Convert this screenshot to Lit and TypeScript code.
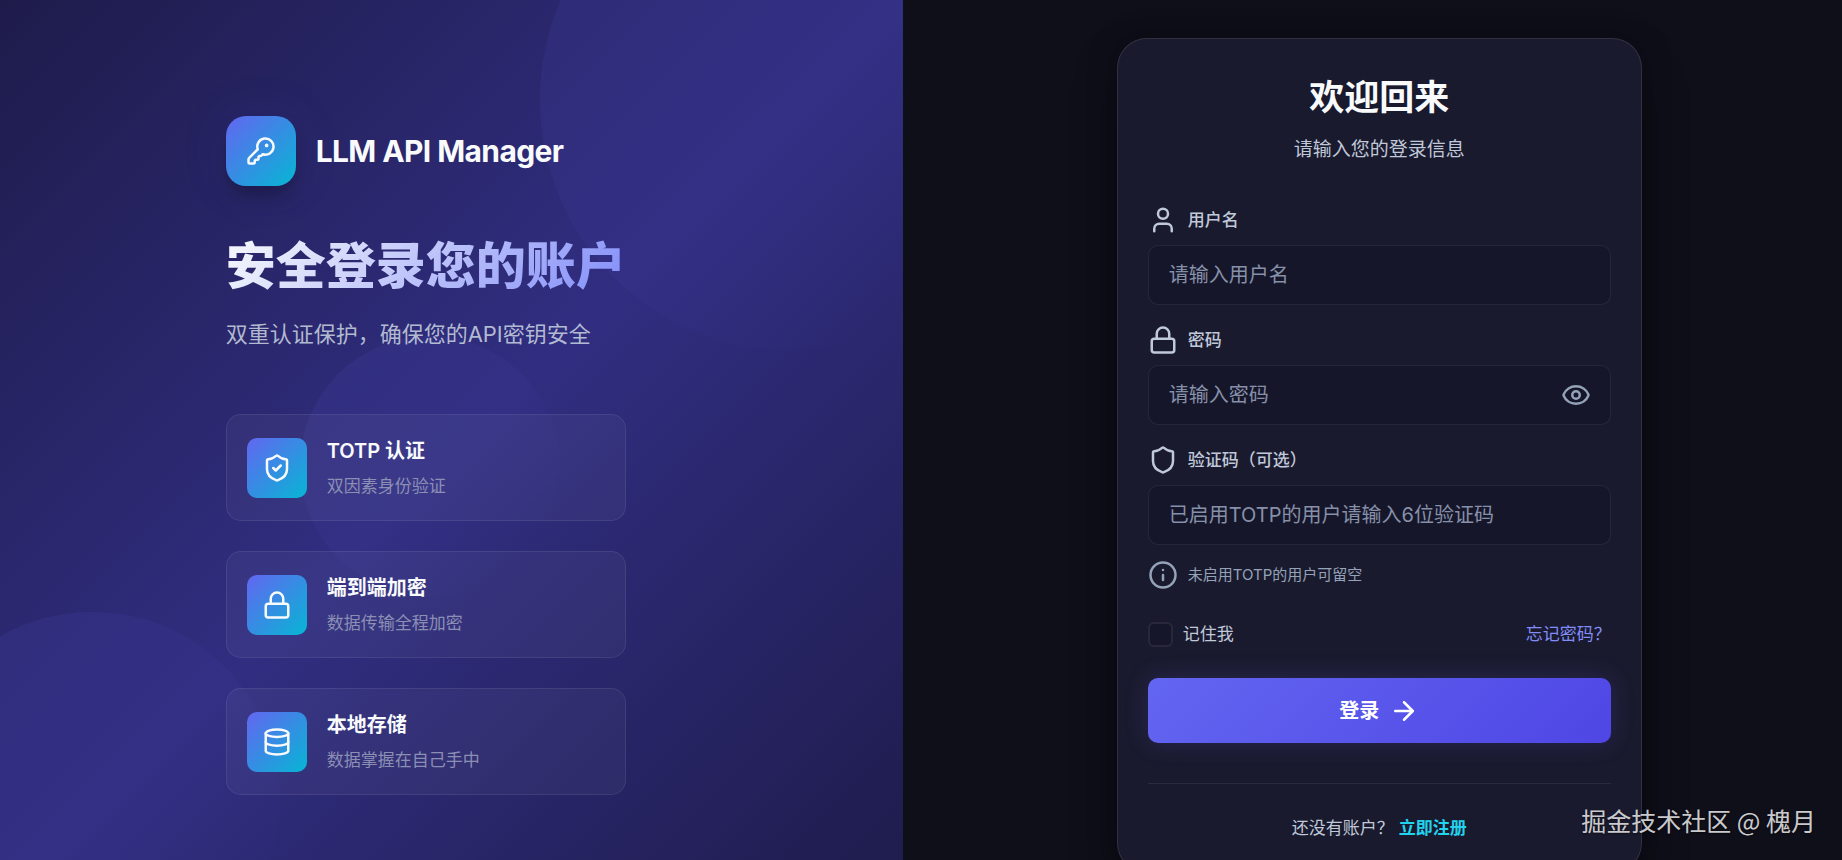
import { LitElement, html, svg, css } from "lit";
import { customElement, state } from "lit/decorators.js";

const icons = {
  key: svg`<path d="M2.586 17.414A2 2 0 0 0 2 18.828V21a1 1 0 0 0 1 1h3a1 1 0 0 0 1-1v-1a1 1 0 0 1 1-1h1a1 1 0 0 0 1-1v-1a1 1 0 0 1 1-1h.172a2 2 0 0 0 1.414-.586l.814-.814a6.5 6.5 0 1 0-4-4z"/><circle cx="16.5" cy="7.5" r=".5" fill="currentColor"/>`,
  shieldCheck: svg`<path d="M20 13c0 5-3.5 7.5-7.66 8.95a1 1 0 0 1-.67-.01C7.5 20.5 4 18 4 13V6a1 1 0 0 1 1-1c2 0 4.5-1.2 6.24-2.72a1.17 1.17 0 0 1 1.52 0C14.51 3.81 17 5 19 5a1 1 0 0 1 1 1z"/><path d="m9 12 2 2 4-4"/>`,
  shield: svg`<path d="M20 13c0 5-3.5 7.5-7.66 8.95a1 1 0 0 1-.67-.01C7.5 20.5 4 18 4 13V6a1 1 0 0 1 1-1c2 0 4.5-1.2 6.24-2.72a1.17 1.17 0 0 1 1.52 0C14.51 3.81 17 5 19 5a1 1 0 0 1 1 1z"/>`,
  lock: svg`<rect x="3" y="11" width="18" height="11" rx="2"/><path d="M7 11V7a5 5 0 0 1 10 0v4"/>`,
  database: svg`<ellipse cx="12" cy="5" rx="9" ry="3"/><path d="M3 5v14a9 3 0 0 0 18 0V5"/><path d="M3 12a9 3 0 0 0 18 0"/>`,
  user: svg`<path d="M19 21v-2a4 4 0 0 0-4-4H9a4 4 0 0 0-4 4v2"/><circle cx="12" cy="7" r="4"/>`,
  eye: svg`<path d="M2.062 12.348a1 1 0 0 1 0-.696 10.75 10.75 0 0 1 19.876 0 1 1 0 0 1 0 .696 10.75 10.75 0 0 1-19.876 0"/><circle cx="12" cy="12" r="3"/>`,
  info: svg`<circle cx="12" cy="12" r="10"/><path d="M12 16v-4"/><path d="M12 8h.01"/>`,
  arrow: svg`<path d="M5 12h14"/><path d="m12 5 7 7-7 7"/>`,
};

const icon = (name: keyof typeof icons) => html`<svg class="icon" viewBox="0 0 24 24" aria-hidden="true">${icons[name]}</svg>`;

const features: { icon: keyof typeof icons; title: string; text: string }[] = [
  { icon: "shieldCheck", title: "TOTP 认证", text: "双因素身份验证" },
  { icon: "lock", title: "端到端加密", text: "数据传输全程加密" },
  { icon: "database", title: "本地存储", text: "数据掌握在自己手中" },
];

@customElement("app-root")
export class AppRoot extends LitElement {
  static styles = css`
    :host {
      display: block;
      position: relative;
      height: 100vh;
      overflow: hidden;
      background: #0f0f1a;
      color: #f8fafc;
      font-family: Inter, "Noto Sans CJK SC", sans-serif;
      font-size: 17px;
      line-height: 28px;
    }
    *, *::before, *::after { box-sizing: border-box; }
    h1, h2, h3, p, ul { margin: 0; padding: 0; }
    a { text-decoration: none; }
    .icon {
      display: block;
      flex: none;
      width: 30px;
      height: 30px;
      fill: none;
      stroke: currentColor;
      stroke-width: 2;
      stroke-linecap: round;
      stroke-linejoin: round;
    }
    .scroll {
      height: 100%;
      overflow-y: auto;
      scrollbar-width: none;
    }
    .page {
      display: grid;
      grid-template-columns: 49fr 51fr;
      min-height: 100%;
    }

    .brand {
      position: relative;
      overflow: hidden;
      display: flex;
      flex-direction: column;
      justify-content: center;
      padding: 40px 0 40px 25%;
      background: linear-gradient(135deg, #1e1b4b 0%, #312e81 50%, #1e1b4b 100%);
    }
    .orb {
      position: absolute;
      border-radius: 50%;
      background: linear-gradient(135deg, rgba(99, 102, 241, 0.11) 0%, rgba(99, 102, 241, 0) 85%);
    }
    .orb.top { width: 500px; height: 500px; top: -150px; right: -137px; }
    .orb.bottom { width: 375px; height: 375px; bottom: -76px; left: -95px; }
    .orb.middle { width: 260px; height: 260px; top: 336px; left: 300px; }
    .content { position: relative; }
    .logo {
      display: flex;
      align-items: center;
      gap: 20px;
      margin-bottom: 50px;
    }
    .mark {
      display: grid;
      place-items: center;
      width: 70px;
      height: 70px;
      border-radius: 20px;
      background: linear-gradient(135deg, #6366f1, #06b6d4);
      box-shadow: 0 12px 20px -4px rgba(0, 0, 0, 0.35), 0 0 50px rgba(99, 102, 241, 0.1);
    }
    .name { font-size: 30px; line-height: 48px; font-weight: 700; letter-spacing: -0.02em; }
    .headline {
      width: fit-content;
      font-size: 50px;
      line-height: 60px;
      font-weight: 800;
      background: linear-gradient(135deg, #f8fafc 0%, #818cf8 100%);
      -webkit-background-clip: text;
      background-clip: text;
      color: transparent;
    }
    .lead {
      margin-top: 20px;
      font-size: 22px;
      line-height: 36px;
      color: rgba(203, 213, 225, 0.85);
    }
    .features {
      display: grid;
      gap: 30px;
      width: 400px;
      max-width: 100%;
      margin-top: 62px;
      list-style: none;
    }
    .feature {
      display: flex;
      align-items: center;
      gap: 20px;
      padding: 20px;
      border: 1px solid rgba(255, 255, 255, 0.08);
      border-radius: 15px;
      background: rgba(255, 255, 255, 0.04);
    }
    .tile {
      display: grid;
      place-items: center;
      width: 60px;
      height: 60px;
      border-radius: 10px;
      background: linear-gradient(135deg, #6366f1, #06b6d4);
    }
    .feature h3 { margin-bottom: 5px; font-size: 20px; line-height: 32px; font-weight: 600; }
    .feature p { color: #8b8fb4; }

    .panel {
      display: flex;
      align-items: center;
      justify-content: center;
      padding: 38px 15px 38px 29px;
    }
    .card {
      width: 525px;
      max-width: 100%;
      padding: 30px;
      border: 1px solid rgba(255, 255, 255, 0.1);
      border-radius: 30px;
      background: #1a1a2e;
      box-shadow: 0 25px 50px -12px rgba(0, 0, 0, 0.6), 0 0 30px rgba(0, 0, 0, 0.3);
    }
    .intro { margin-bottom: 40px; text-align: center; }
    .intro h2 { font-size: 35px; line-height: 56px; font-weight: 700; }
    .intro p { margin-top: 10px; font-size: 19px; line-height: 30px; color: #c0c9da; }
    .field { display: grid; gap: 10px; margin-bottom: 20px; }
    .label {
      display: flex;
      align-items: center;
      gap: 10px;
      font-weight: 500;
      color: #c0c9da;
    }
    .box { position: relative; display: flex; }
    .input {
      width: 100%;
      height: 60px;
      padding: 0 20px;
      border: 1px solid rgba(255, 255, 255, 0.07);
      border-radius: 10px;
      outline: none;
      background: #16162a;
      color: #f8fafc;
      font: inherit;
      font-size: 20px;
    }
    .input:focus { border-color: #6366f1; }
    .input.secret { padding-right: 60px; }
    .input::placeholder { color: #8690a8; opacity: 1; }
    .reveal {
      position: absolute;
      top: 15px;
      right: 20px;
      padding: 0;
      border: 0;
      background: none;
      color: #94a3b8;
      cursor: pointer;
    }
    .hint {
      display: flex;
      align-items: center;
      gap: 10px;
      margin-top: 5px;
      font-size: 15px;
      color: #94a3b8;
    }
    .options {
      display: flex;
      align-items: center;
      justify-content: space-between;
      margin: 30px 0;
    }
    .remember { display: flex; align-items: center; gap: 10px; color: #c0c9da; }
    .check {
      appearance: none;
      width: 25px;
      height: 25px;
      margin: 0;
      border: 2px solid rgba(255, 255, 255, 0.08);
      border-radius: 6px;
      background: #16162a;
    }
    .check:checked { background: #6366f1; }
    .forgot { color: #818cf8; }
    .submit {
      display: flex;
      align-items: center;
      justify-content: center;
      gap: 10px;
      width: 100%;
      height: 65px;
      border: 0;
      border-radius: 10px;
      background: linear-gradient(135deg, #6366f1, #4f46e5);
      box-shadow: 0 0 25px rgba(99, 102, 241, 0.2);
      color: #fff;
      font: inherit;
      font-size: 20px;
      font-weight: 600;
      cursor: pointer;
    }
    .signup {
      display: flex;
      justify-content: center;
      gap: 5px;
      margin-top: 40px;
      padding-top: 30px;
      border-top: 1px solid rgba(255, 255, 255, 0.08);
      color: #c0c9da;
    }
    .signup a { color: #22d3ee; font-weight: 600; }
    .watermark {
      position: absolute;
      right: 26px;
      bottom: 22px;
      font-family: "Noto Sans CJK SC", sans-serif;
      font-size: 25px;
      line-height: 36px;
      color: rgba(255, 255, 255, 0.8);
      text-shadow: 0 1px 2px rgba(0, 0, 0, 0.5);
      pointer-events: none;
    }
  `;

  @state() private revealed = false;

  private toggle() {
    this.revealed = !this.revealed;
  }

  render() {
    return html`
      <div class="scroll">
        <main class="page">
          <section class="brand">
            <div class="orb top"></div>
            <div class="orb bottom"></div>
            <div class="orb middle"></div>
            <div class="content">
              <div class="logo">
                <div class="mark">${icon("key")}</div>
                <span class="name">LLM API Manager</span>
              </div>
              <h1 class="headline">安全登录您的账户</h1>
              <p class="lead">双重认证保护，确保您的API密钥安全</p>
              <ul class="features">
                ${features.map(
                  (f) => html`<li class="feature">
                    <div class="tile">${icon(f.icon)}</div>
                    <div>
                      <h3>${f.title}</h3>
                      <p>${f.text}</p>
                    </div>
                  </li>`
                )}
              </ul>
            </div>
          </section>
          <section class="panel">
            <div class="card">
              <div class="intro">
                <h2>欢迎回来</h2>
                <p>请输入您的登录信息</p>
              </div>
              <form @submit=${(e: Event) => e.preventDefault()}>
                <div class="field">
                  <label class="label" for="username">${icon("user")}用户名</label>
                  <input class="input" id="username" type="text" placeholder="请输入用户名" />
                </div>
                <div class="field">
                  <label class="label" for="password">${icon("lock")}密码</label>
                  <div class="box">
                    <input class="input secret" id="password" type=${this.revealed ? "text" : "password"} placeholder="请输入密码" />
                    <button class="reveal" type="button" aria-label="显示密码" @click=${this.toggle}>${icon("eye")}</button>
                  </div>
                </div>
                <div class="field">
                  <label class="label" for="code">${icon("shield")}验证码（可选）</label>
                  <input class="input" id="code" type="text" inputmode="numeric" maxlength="6" placeholder="已启用TOTP的用户请输入6位验证码" />
                  <p class="hint">${icon("info")}未启用TOTP的用户可留空</p>
                </div>
                <div class="options">
                  <label class="remember" for="remember"><input class="check" id="remember" type="checkbox" />记住我</label>
                  <a class="forgot" href="#forgot">忘记密码？</a>
                </div>
                <button class="submit" type="submit">登录${icon("arrow")}</button>
              </form>
              <p class="signup"><span>还没有账户？</span><a href="#register">立即注册</a></p>
            </div>
          </section>
        </main>
      </div>
      <div class="watermark">掘金技术社区 @ 槐月</div>
    `;
  }
}
